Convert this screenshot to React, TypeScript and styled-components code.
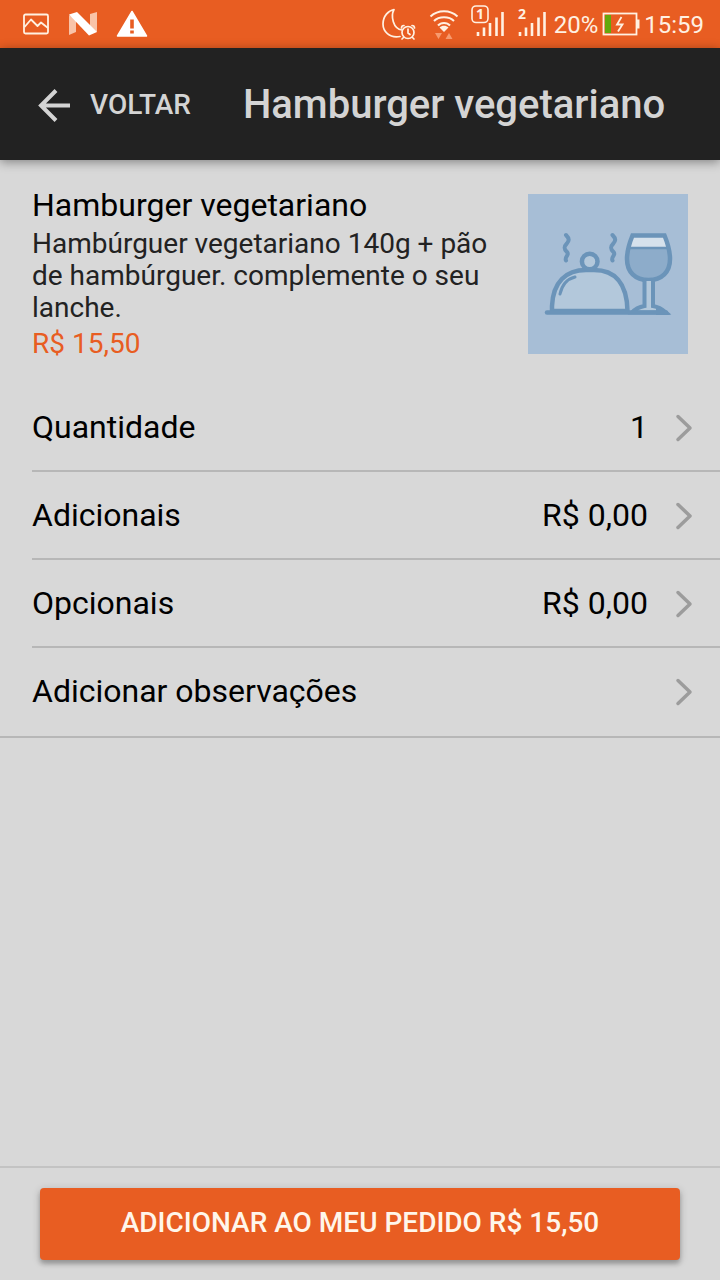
import React from "react";
import styled, { createGlobalStyle } from "styled-components";

const colors = {
  brand: "#e85d22",
  bar: "#222222",
  barText: "#d4d4d4",
  page: "#d8d8d8",
  line: "#b7b7b7",
  chevron: "#9c9c9c",
  status: "#fff1e2",
};

const GlobalStyle = createGlobalStyle`
  * { box-sizing: border-box; }
  body {
    margin: 0;
    background: ${colors.page};
    color: #000;
    font-family: Roboto, "Liberation Sans", sans-serif;
  }
  h1, h2, p, ul { margin: 0; padding: 0; font-weight: 400; }
  button { font: inherit; border: 0; cursor: pointer; }
  svg { display: block; flex: none; }
`;

const Screen = styled.div`
  min-height: 100vh;
  display: flex;
  flex-direction: column;
`;

const StatusBar = styled.div`
  height: 48px;
  padding: 0 16px 0 22px;
  display: flex;
  align-items: center;
  justify-content: space-between;
  background: ${colors.brand};
  color: ${colors.status};
  font-size: 24px;
  line-height: 28px;
`;

const StatusGroup = styled.div<{ $gap: number }>`
  display: flex;
  align-items: center;
  gap: ${(p) => p.$gap}px;
`;

const StatusText = styled.span`
  padding-top: 2px;
`;

const AppBar = styled.header`
  height: 112px;
  padding: 2px 32px 0;
  display: flex;
  align-items: center;
  gap: 52px;
  background: ${colors.bar};
  color: ${colors.barText};
  box-shadow: 0 2px 10px rgba(0, 0, 0, 0.4);
`;

const BackButton = styled.button`
  display: flex;
  align-items: center;
  gap: 18px;
  padding: 0 0 0 4px;
  background: none;
  color: inherit;
  font-size: 28px;
  font-weight: 500;
  line-height: 36px;
  text-transform: uppercase;
`;

const BarTitle = styled.h1`
  font-size: 40px;
  font-weight: 500;
  line-height: 48px;
  white-space: nowrap;
`;

const Content = styled.main`
  flex: 1;
`;

const Product = styled.section`
  padding: 26px 32px 24px;
  display: flex;
  justify-content: space-between;
  gap: 32px;
`;

const ProductInfo = styled.div`
  flex: 1;
`;

const ProductName = styled.h2`
  margin-bottom: 4px;
  font-size: 32px;
  line-height: 38px;
`;

const Description = styled.p`
  color: #222;
  font-size: 28px;
  line-height: 32px;
`;

const Price = styled.p`
  padding-top: 4px;
  color: ${colors.brand};
  font-size: 28px;
  line-height: 32px;
`;

const Thumb = styled.div`
  margin-top: 8px;
  width: 160px;
  height: 160px;
  background: #a7bed6;
`;

const List = styled.ul`
  list-style: none;
  border-bottom: 2px solid ${colors.line};
`;

const Item = styled.li`
  padding-left: 32px;
`;

const Row = styled.button<{ $last: boolean }>`
  width: 100%;
  height: 88px;
  padding: 0 24px 0 0;
  display: flex;
  align-items: center;
  background: none;
  color: inherit;
  font-size: 32px;
  line-height: 40px;
  text-align: left;
  border-bottom: 2px solid ${(p) => (p.$last ? "transparent" : colors.line)};
`;

const RowLabel = styled.span`
  flex: 1;
`;

const RowValue = styled.span`
  margin-right: 24px;
`;

const Footer = styled.footer`
  padding: 20px 40px;
  border-top: 2px solid #c3c3c3;
`;

const AddButton = styled.button`
  width: 100%;
  height: 72px;
  padding: 0 0 4px;
  border-radius: 4px;
  background: ${colors.brand};
  color: #fff6ea;
  font-size: 28px;
  font-weight: 500;
  text-transform: uppercase;
  box-shadow: 0 4px 4px rgba(0, 0, 0, 0.2), 0 2px 8px rgba(0, 0, 0, 0.2);
`;

const ImageIcon = () => (
  <svg width="28" height="24" viewBox="0 0 28 24" fill="none" stroke={colors.status} strokeWidth="1.8" strokeLinejoin="round">
    <rect x="2" y="2.5" width="24" height="19" rx="1.5" />
    <path d="M2.5 15 9 7.5 15.500 14 19 10.500 26 16" />
  </svg>
);

const NougatIcon = () => (
  <svg width="30" height="26" viewBox="0 0 30 26">
    <path d="M1 4 8 8V21L1 24Z M22 3 29 1V21L22 18Z" fill="#f9c3a8" />
    <path d="M1 3.500 9 1 29 21 21 24.500Z" fill="#fff" />
  </svg>
);

const WarningIcon = () => (
  <svg width="32" height="30" viewBox="0 0 32 30">
    <path d="M16 2.500 30.500 27H1.500Z" fill="#fff" stroke="#fff" strokeWidth="1.500" strokeLinejoin="round" />
    <path d="M14.200 10.500H17.800V19.500H14.200Z M14.200 21.500H17.800V24.500H14.200Z" fill={colors.brand} />
  </svg>
);

const NightAlarmIcon = () => (
  <svg width="36" height="34" viewBox="0 0 36 34" fill="none" stroke={colors.status} strokeWidth="1.700" strokeLinecap="round" strokeLinejoin="round">
    <path d="M19 29.500C8 31.500 2 24 2 17 2 9 7.500 3.500 13 2.500 9.500 9 12 22 21 23" />
    <circle cx="27" cy="25.500" r="6" />
    <path d="M27 22V26L29 27.500M20.500 21A2.500 2.500 0 0 1 23 18.500M31 18.500A2.500 2.500 0 0 1 33.500 21M22.500 30.500 21 32M31.500 30.500 33 32" />
  </svg>
);

const WifiIcon = () => (
  <svg width="30" height="34" viewBox="0 0 30 34" fill="none" stroke={colors.status} strokeWidth="2">
    <path d="M1.500 9.500C9 2.500 21 2.500 28.500 9.500M5 14C10 9 20 9 25 14M9 18.500C12 15 18 15 21 18.500" />
    <path d="M10.500 20.500C13 18 17 18 19.500 20.500L15 25Z" fill={colors.status} stroke="none" />
    <path d="M6 26H13L9.500 32Z M16.500 32H23.500L20 26Z" fill="#f79a6e" stroke="none" />
  </svg>
);

const SignalIcon = ({ sim, boxed }: { sim: string; boxed?: boolean }) => (
  <svg width={boxed ? 34 : 33} height="38" viewBox={boxed ? "0 0 34 38" : "4 0 33 38"}>
    {boxed && <rect x="1" y="1" width="16" height="16.500" rx="4" fill="none" stroke={colors.status} strokeWidth="1.600" />}
    <text x="9" y="14" textAnchor="middle" fontFamily="Open Sans, sans-serif" fontSize="14" fontWeight="700" fill={colors.status}>
      {sim}
    </text>
    <path d="M7 31V27M13 31V22.500M19 31V18M25.500 31V12.500M31.500 31V7" stroke={colors.status} strokeWidth="2.600" />
  </svg>
);

const BatteryIcon = () => (
  <svg width="38" height="24" viewBox="0 0 38 24">
    <rect x="1.500" y="1.500" width="33" height="21" fill="none" stroke={colors.status} strokeWidth="1.800" />
    <rect x="3" y="3" width="6" height="18" fill="#65a80c" />
    <rect x="35" y="7.500" width="2.500" height="9" fill={colors.status} />
    <path d="M19.500 5 15 12.500H20.500L16 19.500" fill="none" stroke={colors.status} strokeWidth="1.800" />
  </svg>
);

const BackArrow = () => (
  <svg width="36" height="36" viewBox="0 0 36 36" fill="none" stroke="currentColor" strokeWidth="4">
    <path d="M20 3.500 5 18.500 20 33.500M4 18.500H34" />
  </svg>
);

const Chevron = () => (
  <svg width="24" height="32" viewBox="0 0 24 32" fill="none" stroke={colors.chevron} strokeWidth="3.500" strokeLinecap="round" strokeLinejoin="round">
    <path d="M6 5.500 18 17 6 28.500" />
  </svg>
);

const MealDrawing = () => (
  <svg width="160" height="160" viewBox="0 0 160 160" fill="none" stroke="#6b94b9" strokeWidth="4.500" strokeLinecap="round">
    <path d="M24 117V112C25 88 38 76 58 76H66C86 76 99 88 99.500 117Z" fill="#b3c8db" />
    <circle cx="61.700" cy="67.500" r="7.800" fill="#b3c8db" />
    <path d="M32 100C34 91 39 85 47 83" strokeWidth="3" />
    <path d="M38 41C42 45 41 47 38.500 50 35.500 53 36 55 39 58 42 61 36 63 38 66.500M84.500 41C88.500 45 87.500 47 85 50 82 53 82.500 55 85.500 58 88.500 61 82.500 63 84.500 66.500" strokeWidth="4" />
    <path d="M104.500 41H136L141 54H101Z" fill="#d5e1ec" stroke="none" />
    <path d="M101 54H140C144 73 137 86 120.500 86 103 86 96 73 101 54Z" fill="#8dacca" stroke="none" />
    <path d="M101 54H140" strokeWidth="2.500" />
    <path d="M104.500 41.500H136.500C140 50 142 58 142 65 142 78 134 86 120.500 86 107 86 99 78 99 65 99 58 101 50 104.500 41.500Z" />
    <path d="M116.500 87V112C111 113 107 115 104 118.500H138C134 115 131 113 125 112V87" fill="#b3c8db" strokeWidth="4" />
    <path d="M19 118.500H138" />
    <path d="M128 112 143 121H128Z" fill="#6b94b9" stroke="none" />
  </svg>
);

const options = [
  { label: "Quantidade", value: "1" },
  { label: "Adicionais", value: "R$ 0,00" },
  { label: "Opcionais", value: "R$ 0,00" },
  { label: "Adicionar observações", value: "" },
];

export default function App() {
  return (
    <Screen>
      <GlobalStyle />
      <StatusBar>
        <StatusGroup $gap={18}>
          <ImageIcon />
          <NougatIcon />
          <WarningIcon />
        </StatusGroup>
        <StatusGroup $gap={4}>
          <StatusGroup $gap={12}>
            <NightAlarmIcon />
            <WifiIcon />
            <SignalIcon sim="1" boxed />
            <SignalIcon sim="2" />
          </StatusGroup>
          <StatusText>20%</StatusText>
          <BatteryIcon />
          <StatusText>15:59</StatusText>
        </StatusGroup>
      </StatusBar>
      <AppBar>
        <BackButton type="button">
          <BackArrow />
          Voltar
        </BackButton>
        <BarTitle>Hamburger vegetariano</BarTitle>
      </AppBar>
      <Content>
        <Product>
          <ProductInfo>
            <ProductName>Hamburger vegetariano</ProductName>
            <Description>
              Hambúrguer vegetariano 140g + pão de hambúrguer. complemente o seu lanche.
            </Description>
            <Price>R$ 15,50</Price>
          </ProductInfo>
          <Thumb>
            <MealDrawing />
          </Thumb>
        </Product>
        <List>
          {options.map((option, i) => (
            <Item key={option.label}>
              <Row type="button" $last={i === options.length - 1}>
                <RowLabel>{option.label}</RowLabel>
                <RowValue>{option.value}</RowValue>
                <Chevron />
              </Row>
            </Item>
          ))}
        </List>
      </Content>
      <Footer>
        <AddButton type="button">Adicionar ao meu pedido R$ 15,50</AddButton>
      </Footer>
    </Screen>
  );
}
